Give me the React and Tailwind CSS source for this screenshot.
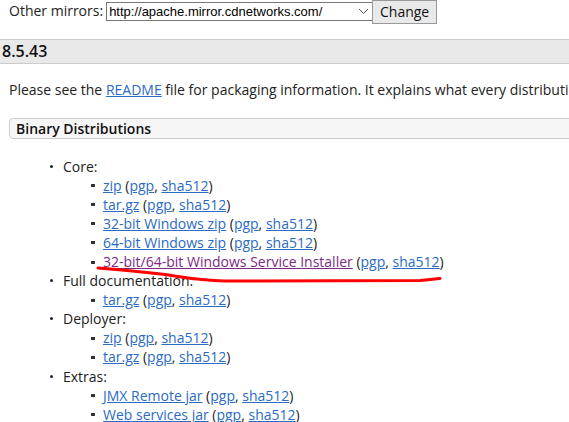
import React from "react";

const A = ({ children, v }) => (
  <a href="#" className={v ? "text-[#7b2a86] underline" : "text-[#2a6bc4] underline"}>
    {children}
  </a>
);

const Sub = ({ name, v }) => (
  <li className="flex items-center h-[19.1px]">
    <span className="w-[4px] h-[3px] bg-[#333] ml-[91px] mr-[8px] mt-[1px]" />
    <span>
      <A v={v}>{name}</A> (<A>pgp</A>, <A>sha512</A>)
    </span>
  </li>
);

const Top = ({ label, children }) => (
  <li>
    <div className="flex items-center h-[19.1px]">
      <span className="w-[3px] h-[3px] rounded-full bg-[#222] ml-[50px] mr-[10px]" />
      <span>{label}</span>
    </div>
    <ul>{children}</ul>
  </li>
);

export default function App() {
  return (
    <div
      className="relative w-[569px] h-[422px] overflow-hidden bg-white text-[#222] text-[14px] leading-[19px]"
      style={{ fontFamily: '"Open Sans", "Noto Sans", sans-serif' }}
    >
      <div className="flex items-start h-[24px]">
        <span className="ml-[9px] mr-[3px] mt-[1px] text-[14px]">Other mirrors:</span>
        <div
          className="mt-[2px] w-[267px] h-[19px] border border-[#767676] flex items-center justify-between pl-[2px] pr-[2px] text-[13px] text-black"
          style={{ fontFamily: '"Liberation Sans", Arial, sans-serif' }}
        >
          <span>http://apache.mirror.cdnetworks.com/</span>
          <svg width="11" height="7" viewBox="0 0 11 7" className="mr-[1px]">
            <path d="M1 1 L5.5 5.5 L10 1" fill="none" stroke="#555" strokeWidth="1" />
          </svg>
        </div>
        <button className="w-[65px] h-[24px] -ml-px border border-[#999] bg-[#e9e9e9] text-[14px] text-[#111] leading-[20px]">
          Change
        </button>
      </div>

      <div className="mt-[15px] h-[25px] bg-[#e9e9e9] border-t border-b border-[#cccccc] flex items-center pl-[2px] text-[16px] font-semibold text-[#111]">
        8.5.43
      </div>

      <p className="mt-[16px] ml-[9px] whitespace-nowrap leading-[19.5px]">
        Please see the <A>README</A> file for packaging information. It explains what every distribution contains.
      </p>

      <div className="mt-[18px] ml-[9px] h-[21px] bg-[#f6f6f6] border border-[#cccccc] rounded-l-[4px] flex items-center pl-[6px] font-semibold text-[#111] w-[600px]">
        Binary Distributions
      </div>

      <ul className="mt-[18px]">
        <Top label="Core:">
          <Sub name="zip" />
          <Sub name="tar.gz" />
          <Sub name="32-bit Windows zip" />
          <Sub name="64-bit Windows zip" />
          <Sub name="32-bit/64-bit Windows Service Installer" v />
        </Top>
        <Top label="Full documentation:">
          <Sub name="tar.gz" />
        </Top>
        <Top label="Deployer:">
          <Sub name="zip" />
          <Sub name="tar.gz" />
        </Top>
        <Top label="Extras:">
          <Sub name="JMX Remote jar" />
          <Sub name="Web services jar" />
        </Top>
      </ul>

      <svg className="absolute left-0 top-0 pointer-events-none" width="569" height="422">
        <path
          d="M98 268 C 120 269.5, 140 271.5, 165 274.5 C 185 277.5, 200 280.5, 225 281 L 420 280.5 C 428 280, 434 279, 440 278.5"
          fill="none"
          stroke="#ff0000"
          strokeWidth="3"
          strokeLinecap="round"
        />
      </svg>
    </div>
  );
}
